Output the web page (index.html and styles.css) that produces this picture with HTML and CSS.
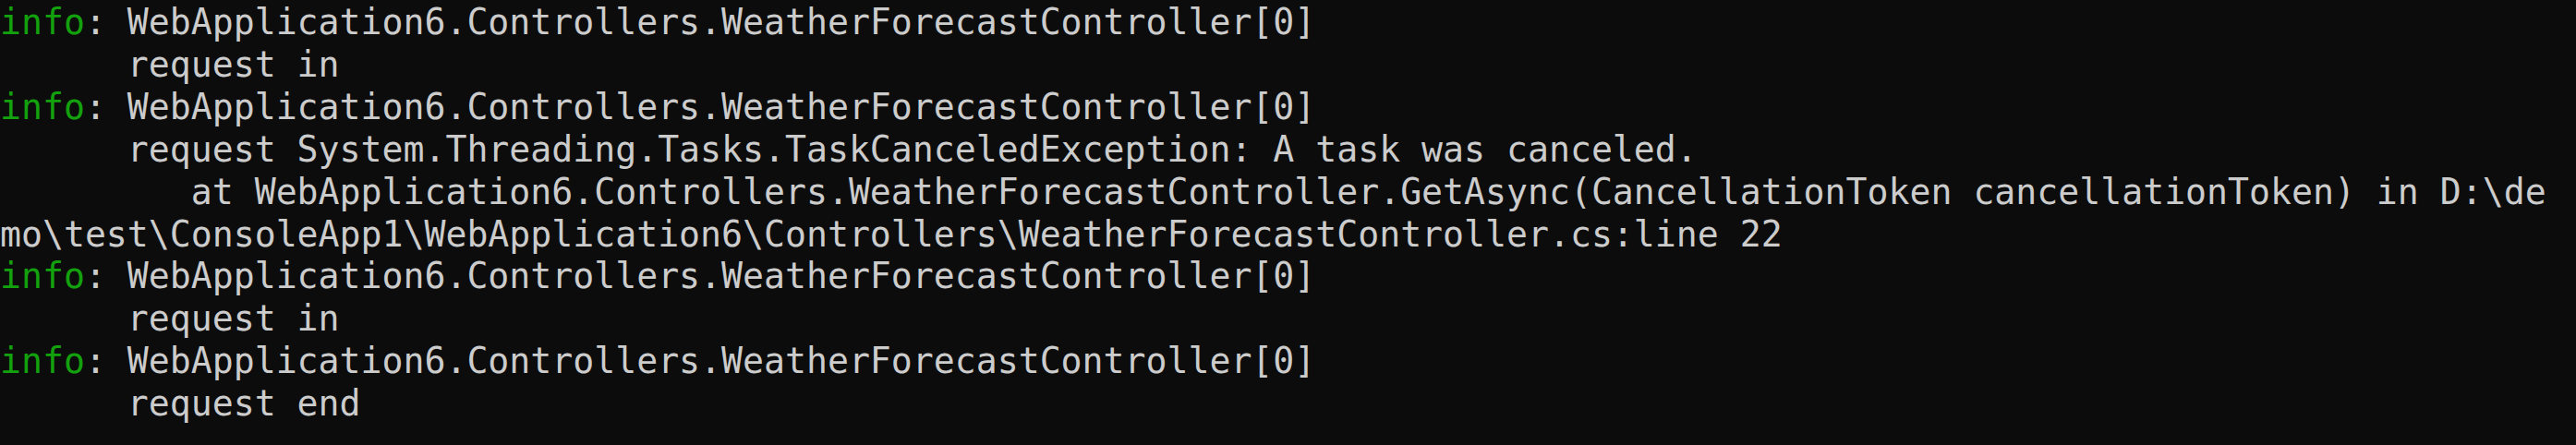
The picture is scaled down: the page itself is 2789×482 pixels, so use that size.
FILE: index.html
```html
<!DOCTYPE html>
<html lang="en">
<head>
<meta charset="utf-8">
<title>Console</title>
<link rel="stylesheet" href="styles.css">
</head>
<body>
<div class="terminal">
<div class="line"><span class="info">info</span>: WebApplication6.Controllers.WeatherForecastController[0]</div>
<div class="line">      request in</div>
<div class="line"><span class="info">info</span>: WebApplication6.Controllers.WeatherForecastController[0]</div>
<div class="line">      request System.Threading.Tasks.TaskCanceledException: A task was canceled.</div>
<div class="line">         at WebApplication6.Controllers.WeatherForecastController.GetAsync(CancellationToken cancellationToken) in D:\de</div>
<div class="line">mo\test\ConsoleApp1\WebApplication6\Controllers\WeatherForecastController.cs:line 22</div>
<div class="line"><span class="info">info</span>: WebApplication6.Controllers.WeatherForecastController[0]</div>
<div class="line">      request in</div>
<div class="line"><span class="info">info</span>: WebApplication6.Controllers.WeatherForecastController[0]</div>
<div class="line">      request end</div>
</div>
</body>
</html>
```
FILE: styles.css
```css
html, body {
  margin: 0;
  padding: 0;
  background: #0c0c0c;
}
body {
  width: 2789px;
  height: 482px;
  overflow: hidden;
}
.terminal {
  padding-top: 2.4px;
  font-family: "DejaVu Sans Mono", "Liberation Mono", monospace;
  font-size: 38.16px;
  line-height: 45.85px;
  color: #cccccc;
}
.line {
  white-space: pre;
}
.info {
  color: #13a10e;
}
```
